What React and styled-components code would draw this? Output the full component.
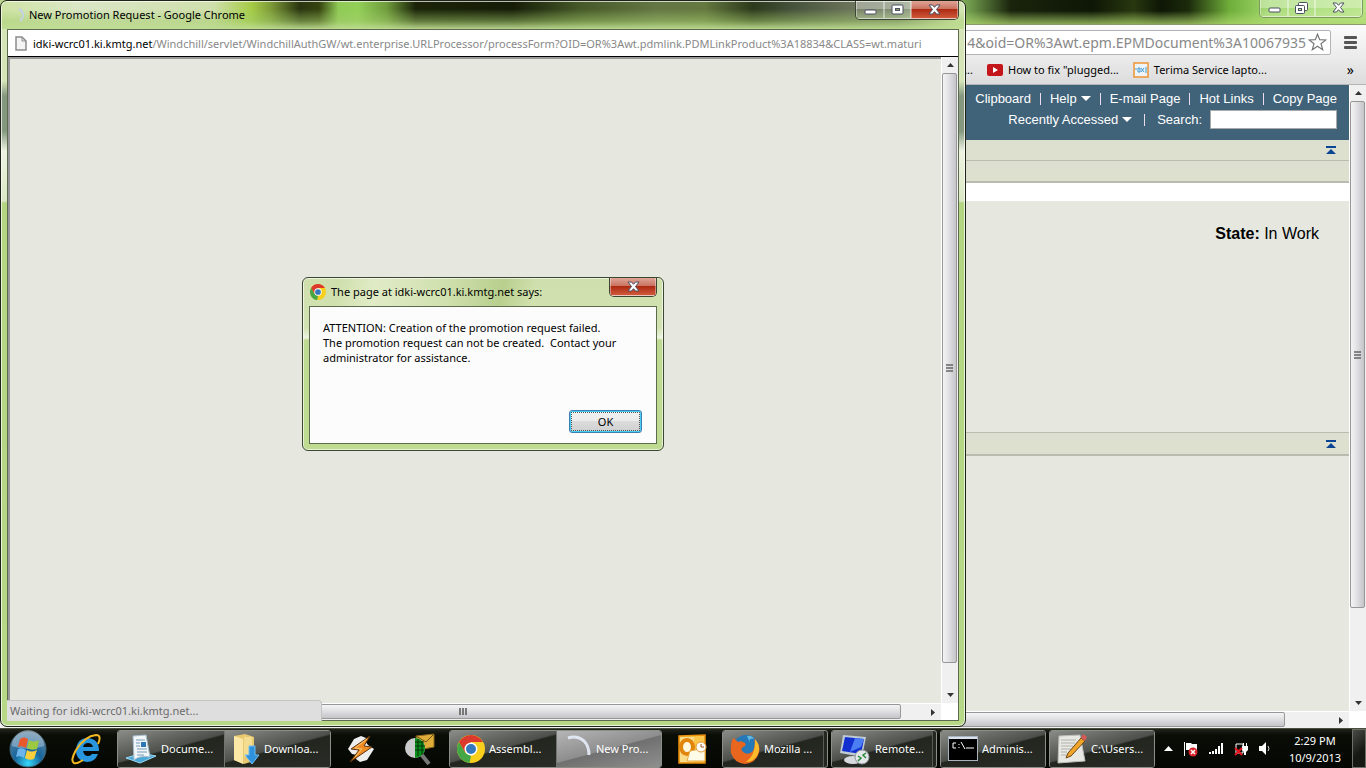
import React from 'react';
import { styled, createGlobalStyle, css } from 'styled-components';

const App = () => {
  return (
    <>
      <GlobalStyle />
      <Desktop>
        <Workspace>
          <MainWindow />
          <PopupWindow />
          <AlertDialog />
        </Workspace>
        <TaskbarArea />
      </Desktop>
    </>
  );
};

const MainWindow = () => {
  return (
    <Browser>
      <BrowserGlass>
        <CaptionButtons $clear>
          <CaptionButton aria-label='Minimize' $width={28}>
            <MinimizeGlyph />
          </CaptionButton>
          <CaptionButton aria-label='Restore' $width={27}>
            <RestoreGlyph />
          </CaptionButton>
          <CaptionButton aria-label='Close' $width={47}>
            <CloseGlyph />
          </CaptionButton>
        </CaptionButtons>
      </BrowserGlass>
      <Toolbar>
        <Omnibox>
          <input
            aria-label='Address'
            defaultValue='4&oid=OR%3Awt.epm.EPMDocument%3A10067935'
          />
          <StarIcon />
        </Omnibox>
        <MenuButton aria-label='Menu'>
          <span />
          <span />
          <span />
        </MenuButton>
      </Toolbar>
      <Bookmarks>
        <a href='#more'>...</a>
        <a href='#plugged'>
          <YoutubeIcon />
          How to fix "plugged...
        </a>
        <a href='#terima'>
          <XamppIcon />
          Terima Service lapto...
        </a>
        <OverflowButton aria-label='More bookmarks'>»</OverflowButton>
      </Bookmarks>
      <Viewport>
        <PageColumn>
          <WindchillHeader>
            <NavRow>
              <Divider />
              <a href='#clipboard'>Clipboard</a>
              <Divider />
              <a href='#help'>
                Help <Caret />
              </a>
              <Divider />
              <a href='#email'>E-mail Page</a>
              <Divider />
              <a href='#hot'>Hot Links</a>
              <Divider />
              <a href='#copy'>Copy Page</a>
            </NavRow>
            <NavRow $wide>
              <a href='#recent'>
                Recently Accessed <Caret />
              </a>
              <Divider />
              <label htmlFor='search'>Search:</label>
              <SearchInput id='search' type='text' />
            </NavRow>
          </WindchillHeader>
          <Band $height={21} $line={1}>
            <CollapseButton aria-label='Collapse header'>
              <CollapseIcon />
            </CollapseButton>
          </Band>
          <Band $height={22} $line={2} />
          <WhiteStrip />
          <StateRow>
            <b>State:</b> In Work
          </StateRow>
          <Band $height={24} $line={2} $top>
            <CollapseButton aria-label='Collapse details'>
              <CollapseIcon />
            </CollapseButton>
          </Band>
          <PageRest />
          <HScroll size={1267} rest={48} />
        </PageColumn>
        <ScrollColumn>
          <VScroll size={504} rest={88} />
          <ScrollCorner />
        </ScrollColumn>
      </Viewport>
    </Browser>
  );
};

const PopupWindow = () => {
  return (
    <Popup>
      <PopupTitle>
        <LoadingIcon />
        <h1>New Promotion Request - Google Chrome</h1>
        <CaptionButtons>
          <CaptionButton aria-label='Minimize' $width={28}>
            <MinimizeGlyph />
          </CaptionButton>
          <CaptionButton aria-label='Maximize' $width={27}>
            <MaximizeGlyph />
          </CaptionButton>
          <CaptionButton aria-label='Close' $width={47} $red>
            <CloseGlyph />
          </CaptionButton>
        </CaptionButtons>
      </PopupTitle>
      <PopupBody>
        <PopupUrl>
          <PageIcon />
          <p>
            <b>idki-wcrc01.ki.kmtg.net</b>
            /Windchill/servlet/WindchillAuthGW/wt.enterprise.URLProcessor/processForm?OID=OR%3Awt.pdmlink.PDMLinkProduct%3A18834&amp;CLASS=wt.maturi
          </p>
        </PopupUrl>
        <PopupContent>
          <PageColumn>
            <BlankPage />
            <HScroll size={873} rest={24} />
          </PageColumn>
          <ScrollColumn>
            <VScroll size={588} rest={24} />
            <ScrollCorner />
          </ScrollColumn>
        </PopupContent>
        <StatusBubble>Waiting for idki-wcrc01.ki.kmtg.net...</StatusBubble>
      </PopupBody>
    </Popup>
  );
};

const AlertDialog = () => {
  return (
    <Dialog role='alertdialog' aria-labelledby='alert-title'>
      <DialogTitle>
        <ChromeIcon size={16} />
        <h2 id='alert-title'>The page at idki-wcrc01.ki.kmtg.net says:</h2>
        <CaptionButtons>
          <CaptionButton aria-label='Close' $width={46} $red>
            <CloseGlyph />
          </CaptionButton>
        </CaptionButtons>
      </DialogTitle>
      <DialogBody>
        <p>
          ATTENTION: Creation of the promotion request failed.
          <br />
          The promotion request can not be created.&nbsp; Contact your
          <br />
          administrator for assistance.
        </p>
        <OkButton>
          <span>OK</span>
        </OkButton>
      </DialogBody>
    </Dialog>
  );
};

const TaskbarArea = () => {
  return (
    <Taskbar>
      <StartButton aria-label='Start'>
        <StartOrb />
      </StartButton>
      <PinButton aria-label='Internet Explorer' $width={62}>
        <IeIcon />
      </PinButton>
      <TaskGroup>
        <TaskButton $width={106}>
          <DocumentsIcon />
          <span>Docume...</span>
        </TaskButton>
        <TaskButton $width={106}>
          <FolderIcon />
          <span>Downloa...</span>
        </TaskButton>
      </TaskGroup>
      <PinButton aria-label='Winamp' $width={59}>
        <WinampIcon />
      </PinButton>
      <PinButton aria-label='Mail search' $width={59}>
        <MailSearchIcon />
      </PinButton>
      <TaskGroup>
        <TaskButton $width={106}>
          <ChromeIcon size={28} />
          <span>Assembl...</span>
        </TaskButton>
        <TaskButton $width={105} $active>
          <SpinnerIcon />
          <span>New Pro...</span>
        </TaskButton>
      </TaskGroup>
      <PinButton aria-label='Outlook' $width={60}>
        <OutlookIcon />
      </PinButton>
      <TaskGroup $stack>
        <TaskButton $width={100}>
          <FirefoxIcon />
          <span>Mozilla ...</span>
        </TaskButton>
      </TaskGroup>
      <TaskGroup $stack>
        <TaskButton $width={100}>
          <RemoteIcon />
          <span>Remote...</span>
        </TaskButton>
      </TaskGroup>
      <TaskGroup>
        <TaskButton $width={104}>
          <ConsoleIcon />
          <span>Adminis...</span>
        </TaskButton>
      </TaskGroup>
      <TaskGroup>
        <TaskButton $width={104}>
          <NotepadIcon />
          <span>C:\Users...</span>
        </TaskButton>
      </TaskGroup>
      <Tray>
        <TrayButton aria-label='Show hidden icons'>
          <svg width='9' height='5' viewBox='0 0 9 5'>
            <path d='M0 5L4.500 0L9 5z' fill='#fff' />
          </svg>
        </TrayButton>
        <TrayButton aria-label='Action center'>
          <FlagIcon />
        </TrayButton>
        <TrayButton aria-label='Network'>
          <SignalIcon />
        </TrayButton>
        <TrayButton aria-label='Power'>
          <PowerIcon />
        </TrayButton>
        <TrayButton aria-label='Volume'>
          <VolumeIcon />
        </TrayButton>
        <Clock>
          <span>2:29 PM</span>
          <span>10/9/2013</span>
        </Clock>
        <ShowDesktop aria-label='Show desktop' />
      </Tray>
    </Taskbar>
  );
};

/* scrollbars */

const VScroll = ({ size, rest }) => (
  <VBar>
    <ScrollArrow aria-label='Scroll up'>
      <svg width='7' height='4' viewBox='0 0 7 4'>
        <path d='M0 4L3.500 0L7 4z' fill='#333' />
      </svg>
    </ScrollArrow>
    <VThumb style={{ flexGrow: size }}>
      <svg width='7' height='8' viewBox='0 0 7 8'>
        <path d='M0 1h7M0 4h7M0 7h7' stroke='#666' strokeWidth='1.500' />
      </svg>
    </VThumb>
    <div style={{ flexGrow: rest }} />
    <ScrollArrow aria-label='Scroll down'>
      <svg width='7' height='4' viewBox='0 0 7 4'>
        <path d='M0 0L3.500 4L7 0z' fill='#333' />
      </svg>
    </ScrollArrow>
  </VBar>
);

const HScroll = ({ size, rest }) => (
  <HBar>
    <ScrollArrow aria-label='Scroll left'>
      <svg width='4' height='7' viewBox='0 0 4 7'>
        <path d='M4 0L0 3.500L4 7z' fill='#333' />
      </svg>
    </ScrollArrow>
    <HThumb style={{ flexGrow: size }}>
      <svg width='8' height='7' viewBox='0 0 8 7'>
        <path d='M1 0v7M4 0v7M7 0v7' stroke='#555' strokeWidth='1.500' />
      </svg>
    </HThumb>
    <div style={{ flexGrow: rest }} />
    <ScrollArrow aria-label='Scroll right'>
      <svg width='4' height='7' viewBox='0 0 4 7'>
        <path d='M0 0L4 3.500L0 7z' fill='#333' />
      </svg>
    </ScrollArrow>
  </HBar>
);

/* window glyphs */

const MinimizeGlyph = () => (
  <svg width='13' height='12' viewBox='0 0 13 12'>
    <rect x='1' y='6' width='11' height='4' rx='1' fill='#fff' stroke='#4b4f62' />
  </svg>
);

const MaximizeGlyph = () => (
  <svg width='13' height='12' viewBox='0 0 13 12'>
    <rect x='1' y='1' width='11' height='9' rx='1' fill='#fff' stroke='#4b4f62' />
    <rect x='4.500' y='4.500' width='4' height='2' fill='#8d9a70' stroke='#4b4f62' />
  </svg>
);

const RestoreGlyph = () => (
  <svg width='13' height='13' viewBox='0 0 13 13'>
    <rect x='3.500' y='0.500' width='9' height='8' rx='1' fill='#fff' stroke='#4b4f62' />
    <rect x='0.500' y='3.500' width='9' height='8' rx='1' fill='#fff' stroke='#4b4f62' />
    <rect x='3.500' y='6.500' width='3' height='2' fill='#c6e89a' stroke='#4b4f62' />
  </svg>
);

const CloseGlyph = () => (
  <svg width='13' height='12' viewBox='0 0 13 12'>
    <path
      d='M1 1h3.500L6.500 3.300L8.500 1H12L8.500 5.500L12 10H8.500L6.500 7.700L4.500 10H1L4.500 5.500z'
      fill='#fff'
      stroke='#4b4f62'
    />
  </svg>
);

const CollapseIcon = () => (
  <svg width='10' height='8' viewBox='0 0 10 8'>
    <path d='M0 0h10v2H0zM5 3L10 8H0z' fill='#0a4595' />
  </svg>
);

const PageIcon = () => (
  <svg width='12' height='15' viewBox='0 0 12 15'>
    <path d='M1 1h6l4 4v9H1z' fill='#f4f4f4' stroke='#8c8c8c' strokeWidth='1.500' />
    <path d='M7 1v4h4' fill='none' stroke='#8c8c8c' />
  </svg>
);

const StarIcon = () => (
  <svg width='19' height='18' viewBox='0 0 19 18'>
    <path
      d='M9.500 1.200L11.700 6.700L17.800 7L13 10.700L14.700 16.700L9.500 13.200L4.300 16.700L6 10.700L1.200 7L7.300 6.700z'
      fill='#fff'
      stroke='#777'
      strokeWidth='1.200'
    />
  </svg>
);

const YoutubeIcon = () => (
  <svg width='16' height='12' viewBox='0 0 16 12'>
    <rect width='16' height='12' rx='2' fill='#c4151a' />
    <path d='M6 3L11 6L6 9z' fill='#fff' />
  </svg>
);

const XamppIcon = () => (
  <svg width='16' height='16' viewBox='0 0 16 16'>
    <rect x='1' y='1' width='14' height='14' fill='#eef3f6' stroke='#ee9434' strokeWidth='1.500' />
    <path
      d='M2 7h2M5 6h2v4H5zM8 6l3 4M11 6L8 10M12 6h2M12 8h2M12 10h2'
      fill='none'
      stroke='#3f9ad6'
    />
  </svg>
);

const LoadingIcon = () => (
  <svg width='14' height='14' viewBox='0 0 14 14'>
    <path d='M9 1Q13 3 13 7Q13 11 10 13' fill='none' stroke='#c3d2e2' strokeWidth='2' />
  </svg>
);

const SpinnerIcon = () => (
  <svg width='28' height='28' viewBox='0 0 28 28'>
    <path
      d='M4 3Q13 0 20 6Q25 11 25 20'
      fill='none'
      stroke='#dfe6f2'
      strokeWidth='3'
    />
  </svg>
);

const ChromeIcon = ({ size }) => (
  <svg width={size} height={size} viewBox='0 0 28 28'>
    <circle cx='14' cy='14' r='14' fill='#f8cf1c' />
    <path d='M14 7H26.100A14 14 0 0 0 1.900 7L8 17.500z' fill='#dc3a2c' />
    <path d='M1.900 7L8 17.500L14 21L12.500 28A14 14 0 0 1 1.900 7z' fill='#46a545' />
    <circle cx='14' cy='14' r='6.500' fill='#fff' />
    <circle cx='14' cy='14' r='5' fill='#3377bd' />
  </svg>
);

/* taskbar icons */

const StartOrb = () => (
  <svg width='38' height='38' viewBox='0 0 38 38'>
    <defs>
      <radialGradient id='orb' cx='50%' cy='90%' r='85%'>
        <stop offset='0' stopColor='#35d9fb' />
        <stop offset='0.450' stopColor='#16659c' />
        <stop offset='1' stopColor='#5d87a5' />
      </radialGradient>
    </defs>
    <circle cx='19' cy='19' r='18' fill='url(#orb)' stroke='#44606f' />
    <path d='M3 16A16 16 0 0 1 35 16Q19 22 3 16z' fill='#fff' opacity='0.300' />
    <path d='M11 9Q15 6 19 9L17 18Q13 15 9 17z' fill='#e9582b' />
    <path d='M20 10Q25 13 30 10L28 19Q22 21 18 18z' fill='#9bc93f' />
    <path d='M9 19Q13 17 17 20L15 28Q11 25 7 27z' fill='#6bb4ec' />
    <path d='M18 20Q22 23 28 20L25 29Q20 31 16 28z' fill='#fbcf3c' />
  </svg>
);

const IeIcon = () => (
  <svg width='32' height='32' viewBox='0 0 32 32'>
    <path
      d='M29 18H13Q14 23 18 23Q21 23 22 21H28Q25 29 17 29Q6 28 6 17Q7 5 18 5Q29 6 29 18zM13 14H23Q22 10 18 10Q14 10 13 14z'
      fill='#2997df'
    />
    <path
      d='M28 11Q32 2 26 2Q15 3 6 17Q0 28 4 30Q7 31 13 27'
      fill='none'
      stroke='#f4b622'
      strokeWidth='2'
    />
  </svg>
);

const DocumentsIcon = () => (
  <svg width='32' height='30' viewBox='0 0 32 30'>
    <path d='M1 24L17 19L31 22L15 29z' fill='#4ba9d8' stroke='#9bd8f3' />
    <path d='M8 2L21 1L25 23Q15 21 9 26z' fill='#f0f6fa' stroke='#a7bccb' />
    <path d='M11 6h9M11 9h4M11 12h4M12 15h10M12 18h10M12 21h7' stroke='#7699b4' />
    <rect x='16' y='8' width='5' height='5' fill='#2d76b4' />
  </svg>
);

const FolderIcon = () => (
  <svg width='28' height='32' viewBox='0 0 28 32'>
    <path d='M2 3L13 1L22 4V28L12 31L2 27z' fill='#e9c970' />
    <path d='M2 3L11 6V31L2 27z' fill='#fbe8a6' />
    <path d='M12 4h8v20h-8z' fill='#f4dd91' />
    <path d='M17 13H23V22H27L20 31L13 22H17z' fill='#2e93dc' stroke='#75bdf0' />
  </svg>
);

const WinampIcon = () => (
  <svg width='28' height='28' viewBox='0 0 28 28'>
    <path d='M14 1L19 3L18 6L21 10L27 14L20 25L13 27L9 24L10 20L5 19L1 14L7 4z' fill='#eee' />
    <path d='M23 1L4 14L12 15L3 27L25 12L17 11z' fill='#f08b22' stroke='#5e3510' />
    <path d='M20 4L8 13L15 14L8 22' fill='none' stroke='#fcc877' />
  </svg>
);

const MailSearchIcon = () => (
  <svg width='32' height='34' viewBox='0 0 32 34'>
    <path d='M12 4L30 2V15L14 18z' fill='#dfae3a' stroke='#8b691b' />
    <path d='M12 4L22 10L30 2' fill='none' stroke='#6d5110' />
    <path d='M17 22L25 32' stroke='#777' strokeWidth='4' />
    <circle cx='11' cy='16' r='10' fill='#c9cbcc' />
    <path d='M11 6A10 10 0 0 1 11 26z' fill='#0a8f1c' />
    <path d='M11 10h9M11 14h10M11 18h9M14 7v17M18 9v14' stroke='#04340a' />
  </svg>
);

const OutlookIcon = () => (
  <svg width='30' height='30' viewBox='0 0 30 30'>
    <path d='M2 2L28 1V29H2z' fill='#fbc64a' stroke='#e98f0c' strokeWidth='1.500' />
    <path d='M3 3H17V28H3z' fill='#f9dc8a' />
    <ellipse cx='10' cy='13' rx='6' ry='7' fill='#fff8df' stroke='#e2850d' strokeWidth='4' />
    <path d='M13 17L28 14V27H10z' fill='#fffbe9' stroke='#e7a941' />
    <circle cx='24' cy='13' r='5' fill='#fff' stroke='#e39a33' />
    <path d='M24 10v3h3' fill='none' stroke='#a05d18' />
  </svg>
);

const FirefoxIcon = () => (
  <svg width='30' height='30' viewBox='0 0 30 30'>
    <circle cx='16' cy='14' r='13' fill='#2579b8' />
    <path d='M17 2Q22 1 24 5Q18 4 20 9z' fill='#61b6e2' />
    <path
      d='M3 4Q5 5 8 8Q11 6 15 9Q17 12 13 13Q10 15 13 18Q18 22 23 17Q26 11 24 5Q31 10 29 19Q26 29 15 30Q4 29 1 19Q0 10 3 4z'
      fill='#e9661f'
    />
    <path d='M25 5Q32 13 27 22Q23 28 16 28Q26 21 25 5z' fill='#fbbb2b' />
  </svg>
);

const RemoteIcon = () => (
  <svg width='32' height='32' viewBox='0 0 32 32'>
    <ellipse cx='14' cy='27' rx='9' ry='4' fill='#d6dade' />
    <path d='M4 2L27 4L23 24L1 20z' fill='#bfcbd4' />
    <path d='M6 4L25 6L22 21L3 18z' fill='#1230d0' />
    <path d='M16 5L25 6L22 14L11 19z' fill='#4b7df3' />
    <circle cx='23' cy='24' r='7' fill='#e3e6e8' stroke='#8d9499' />
    <path d='M19 23l3 2l-3 3M27 20l-3 2l3 3' fill='none' stroke='#2a8a3b' strokeWidth='1.500' />
  </svg>
);

const ConsoleIcon = () => (
  <svg width='30' height='25' viewBox='0 0 30 25'>
    <rect x='0.500' y='0.500' width='29' height='24' fill='#000' stroke='#aab4bf' />
    <path d='M1 1h28v2H1z' fill='#d9e3ee' />
    <path
      d='M8 7H5v5h3M11 8v1M11 11v1M13 6l4 7M18 12h8'
      fill='none'
      stroke='#fff'
    />
  </svg>
);

const NotepadIcon = () => (
  <svg width='30' height='32' viewBox='0 0 30 32'>
    <path d='M2 3L23 2L28 28L1 30z' fill='#e7e7e3' stroke='#bcbcb8' />
    <path d='M4 7h15M4 10h14M4 13h12M4 16h10M4 19h6M4 22h7' stroke='#b3b3ae' />
    <path d='M24 5L28 8L14 23L9 25L11 20z' fill='#f0a429' stroke='#6b4a17' />
    <path d='M26 1L30 4L28 8L24 5z' fill='#d85a56' />
  </svg>
);

const FlagIcon = () => (
  <svg width='16' height='16' viewBox='0 0 16 16'>
    <path d='M1 1h1v14H1zM3 2h5l1 1h5v8H8L7 9H3z' fill='#fff' />
    <circle cx='10' cy='11' r='4.500' fill='#d8232a' />
    <path d='M8 9l4 4M12 9l-4 4' stroke='#fff' strokeWidth='1.500' />
  </svg>
);

const SignalIcon = () => (
  <svg width='15' height='12' viewBox='0 0 15 12'>
    <path d='M0 9h2v2H0zM3 8h2v3H3zM6 6h2v5H6zM9 3h2v8H9zM12 0h2v11h-2z' fill='#fff' />
  </svg>
);

const PowerIcon = () => (
  <svg width='15' height='16' viewBox='0 0 15 16'>
    <path d='M2 3h7v9H2z' fill='none' stroke='#fff' />
    <path d='M8 5h6v4l-2 2v3h-2v-3L8 9zM9 2h1v3H9zM12 2h1v3h-1z' fill='#fff' />
    <path d='M1 7l7 7M8 7l-7 7' stroke='#e3151d' strokeWidth='2' />
  </svg>
);

const VolumeIcon = () => (
  <svg width='12' height='14' viewBox='0 0 12 14'>
    <path d='M0 4h3l4-4v13l-4-4H0z' fill='#fff' />
    <path d='M9 4q2 3 0 5' fill='none' stroke='#ddd' />
  </svg>
);

const uiFont = `'Noto Sans', 'Open Sans', sans-serif`;
const pageFont = `'Liberation Sans', Arial, sans-serif`;

const GlobalStyle = createGlobalStyle`
  * {
    box-sizing: border-box;
  }
  body {
    margin: 0;
    background-color: #000;
    font-family: ${uiFont};
    font-size: 11px;
    color: #000;
    overflow: hidden;
  }
  h1, h2, p {
    margin: 0;
    font-size: 11px;
    font-weight: normal;
  }
  button, input {
    margin: 0;
    padding: 0;
    border: none;
    background: none;
    font-family: inherit;
    color: inherit;
  }
  a {
    color: inherit;
    text-decoration: none;
  }
  svg {
    display: block;
    flex-shrink: 0;
  }
`;

const Desktop = styled.div`
  height: 100vh;
  display: flex;
  flex-direction: column;
`;

const Workspace = styled.main`
  position: relative;
  flex: 1;
  min-height: 0;
  display: flex;
`;

/* main browser */

const Browser = styled.section`
  flex: 1;
  min-width: 0;
  display: flex;
  flex-direction: column;
  background-color: #e6e8df;
`;

const BrowserGlass = styled.div`
  height: 25px;
  flex-shrink: 0;
  display: flex;
  justify-content: flex-end;
  align-items: flex-start;
  border-bottom: 1px solid #8a9a6c;
  background: linear-gradient(to bottom, transparent 45%, rgba(175, 215, 110, 0.75)),
    linear-gradient(
      to right,
      #b9d48c 69%,
      #6f9a4c 71%,
      #1a240c 74%,
      #0e1605 80%,
      #28380f 83%,
      #0e1605 85%,
      #1c2b0b 87%,
      #6fae3a 90%,
      #a0d86c 93%,
      #b4e483 100%
    );
`;

const CaptionButtons = styled.div`
  display: flex;
  height: 19px;
  margin-left: auto;
  border: 1px solid ${(props) => (props.$clear ? '#7d9a5c' : '#3c4433')};
  border-top: none;
  border-radius: 0 0 5px 5px;
  overflow: hidden;
  ${(props) =>
    props.$clear &&
    css`
      height: 18px;
      margin-right: 3px;
    `}
`;

const CaptionButton = styled.button`
  width: ${(props) => props.$width}px;
  display: flex;
  justify-content: center;
  align-items: center;
  border: 1px solid rgba(255, 255, 255, 0.4);
  border-top: none;
  background: linear-gradient(
    to bottom,
    rgba(255, 255, 255, 0.35) 50%,
    rgba(255, 255, 255, 0.08) 50%,
    rgba(255, 255, 255, 0.2)
  );

  ${(props) =>
    props.$red &&
    css`
      background: linear-gradient(to bottom, #dfa596, #c9705e 48%, #ae2b14 50%, #d0583a);
    `}
`;

const Toolbar = styled.div`
  height: 32px;
  flex-shrink: 0;
  display: flex;
  align-items: center;
  gap: 13px;
  padding: 2px 9px 0 9px;
  background: linear-gradient(to bottom, #fbfbfb, #ebebeb);
`;

const Omnibox = styled.div`
  flex: 1;
  height: 25px;
  display: flex;
  align-items: center;
  padding-right: 3px;
  border: 1px solid #b4b4b4;
  border-radius: 2px;
  background-color: #fff;

  input {
    flex: 1;
    min-width: 0;
    height: 22px;
    padding-right: 2px;
    font-size: 14px;
    text-align: right;
    color: #888;
    outline: none;
  }
`;

const MenuButton = styled.button`
  width: 13px;
  display: flex;
  flex-direction: column;
  gap: 2px;

  span {
    height: 3px;
    border-radius: 1px;
    background-color: #555;
  }
`;

const Bookmarks = styled.nav`
  height: 28px;
  flex-shrink: 0;
  display: flex;
  justify-content: flex-end;
  align-items: center;
  gap: 14px;
  padding: 0 12px 2px 0;
  border-bottom: 1px solid #b5b5b5;
  background: linear-gradient(to bottom, #ebebeb, #dcdcdc);

  a {
    display: flex;
    align-items: center;
    gap: 5px;
  }
`;

const OverflowButton = styled.button`
  margin-left: 66px;
  font-size: 14px;
`;

const Viewport = styled.div`
  flex: 1;
  min-height: 0;
  display: flex;
`;

const PageColumn = styled.div`
  flex: 1;
  min-width: 0;
  display: flex;
  flex-direction: column;
`;

const WindchillHeader = styled.header`
  height: 55px;
  flex-shrink: 0;
  display: flex;
  flex-direction: column;
  padding: 3px 12px 0 0;
  background-color: #41637a;
  color: #fff;
  font-family: ${pageFont};
  font-size: 13px;
`;

const NavRow = styled.div`
  height: 21px;
  display: flex;
  justify-content: flex-end;
  align-items: center;
  gap: ${(props) => (props.$wide ? '12px' : '9px')};

  a {
    display: flex;
    align-items: center;
    gap: 4px;
  }
  input {
    margin-left: -4px;
  }
`;

const Divider = styled.span`
  width: 1px;
  height: 12px;
  background-color: #ecdcf0;
`;

const Caret = styled.i`
  border: 5px solid transparent;
  border-top-color: #fff;
  border-bottom: none;
`;

const SearchInput = styled.input`
  width: 127px;
  height: 19px;
  border: 1px solid #a9a9a9;
  background-color: #fff;
  color: #000;
`;

const Band = styled.div`
  height: ${(props) => props.$height}px;
  flex-shrink: 0;
  display: flex;
  justify-content: flex-end;
  align-items: center;
  padding-right: 13px;
  background-color: #dddfcf;
  border-bottom: ${(props) => props.$line}px solid #b9bbae;
  ${(props) =>
    props.$top &&
    css`
      border-top: 1px solid #b9bbae;
    `}
`;

const CollapseButton = styled.button`
  display: flex;
`;

const WhiteStrip = styled.div`
  height: 18px;
  flex-shrink: 0;
  background-color: #fff;
`;

const StateRow = styled.p`
  height: 231px;
  flex-shrink: 0;
  padding: 24px 30px 0 0;
  font-family: ${pageFont};
  font-size: 16px;
  text-align: right;
`;

const PageRest = styled.div`
  flex: 1;
`;

/* scrollbars */

const ScrollColumn = styled.div`
  width: 17px;
  display: flex;
  flex-direction: column;
`;

const ScrollCorner = styled.div`
  height: 17px;
  background-color: #fff;
`;

const VBar = styled.div`
  flex: 1;
  min-height: 0;
  display: flex;
  flex-direction: column;
  background-color: #f0f0f0;
  border-left: 1px solid #fff;
`;

const HBar = styled.div`
  height: 17px;
  flex-shrink: 0;
  display: flex;
  background-color: #f0f0f0;
  border-top: 1px solid #fff;
`;

const ScrollArrow = styled.button`
  width: 16px;
  height: 16px;
  flex-shrink: 0;
  display: flex;
  justify-content: center;
  align-items: center;
`;

const VThumb = styled.div`
  width: 15px;
  display: flex;
  justify-content: center;
  align-items: center;
  border: 1px solid #979797;
  border-radius: 2px;
  background: linear-gradient(to right, #f4f4f5, #e1e1e4 45%, #c4c4c9);
`;

const HThumb = styled.div`
  height: 15px;
  display: flex;
  justify-content: center;
  align-items: center;
  border: 1px solid #979797;
  border-radius: 2px;
  background: linear-gradient(to bottom, #f4f4f5, #e1e1e4 45%, #c4c4c9);
`;

/* popup browser */

const Popup = styled.section`
  position: absolute;
  top: 0;
  bottom: 1px;
  left: 0;
  width: 966px;
  max-width: 100%;
  display: flex;
  flex-direction: column;
  padding: 0 6px 5px 6px;
  border: 1px solid #1d2415;
  border-radius: 7px;
  box-shadow: inset 0 0 0 1px rgba(255, 255, 255, 0.7);
  background: linear-gradient(to bottom, transparent 8px, rgba(165, 205, 110, 0.5) 20px, rgba(190, 220, 145, 0.95) 28px)
      0 0 / 100% 28px no-repeat,
    linear-gradient(
      to right,
      #cfe3a5,
      #dbe6c6 8%,
      #cfdfac 22%,
      #a5cc46 26%,
      #7d9a38 28%,
      #2a350f 31%,
      #35430f 33%,
      #8fca55 35%,
      #93d058 37%,
      #6f9c3c 40%,
      #1b2408 43%,
      #151c07 53%,
      #455827 60%,
      #647644 68%,
      #64783f 73%,
      #2c391b 78%,
      #45513a 82%,
      #6a7359 88%,
      #76836a 93%,
      #d5e6b6 99%
    )
      0 0 / 100% 28px no-repeat,
    linear-gradient(
      to bottom,
      #d5e5b8 80px,
      #84987f 95px,
      #84987f 130px,
      #eef3e2 150px,
      #dbe8c4 200px,
      #b4d582 202px,
      #b7d886
    );
`;

const PopupTitle = styled.header`
  height: 28px;
  flex-shrink: 0;
  display: flex;
  align-items: flex-start;
  gap: 5px;
  padding-left: 3px;

  > svg {
    margin-top: 7px;
  }
  h1 {
    line-height: 27px;
  }
`;

const PopupBody = styled.div`
  position: relative;
  flex: 1;
  min-height: 0;
  display: flex;
  flex-direction: column;
  border: 1px solid #5d6a50;
`;

const PopupUrl = styled.div`
  height: 27px;
  flex-shrink: 0;
  display: flex;
  align-items: center;
  gap: 6px;
  padding-left: 7px;
  border-bottom: 1px solid #000;
  background-color: #fff;
  overflow: hidden;

  p {
    white-space: nowrap;
    color: #888;
  }
  b {
    font-weight: normal;
    color: #000;
  }
`;

const PopupContent = styled.div`
  flex: 1;
  min-height: 0;
  display: flex;
`;

const BlankPage = styled.div`
  flex: 1;
  border: 2px solid #999;
  border-right: none;
  border-bottom: none;
  background-color: #e6e8df;
`;

const StatusBubble = styled.div`
  position: absolute;
  left: -1px;
  bottom: -1px;
  width: 315px;
  height: 21px;
  padding-left: 3px;
  border: 1px solid #c4c4c4;
  border-left: none;
  border-bottom: none;
  border-radius: 0 4px 0 0;
  background-color: #dedede;
  color: #6b6b6b;
  line-height: 20px;
`;

/* alert */

const Dialog = styled.section`
  position: absolute;
  left: 302px;
  top: 277px;
  width: 362px;
  height: 174px;
  display: flex;
  flex-direction: column;
  padding: 0 6px 6px 6px;
  border: 1px solid #3b4731;
  border-radius: 6px;
  box-shadow: inset 0 0 0 1px rgba(255, 255, 255, 0.65);
  background: linear-gradient(
      100deg,
      transparent 10%,
      rgba(235, 243, 215, 0.6) 20%,
      transparent 40%,
      rgba(160, 190, 110, 0.5) 55%,
      transparent 64%
    )
      0 0 / 100% 28px no-repeat,
    linear-gradient(to bottom, #cfdfac, #d3e2b2 50px, #eff4e3 60px, #bfda92 62px, #bedb91);
`;

const DialogTitle = styled.header`
  height: 28px;
  flex-shrink: 0;
  display: flex;
  align-items: flex-start;
  gap: 5px;
  padding-left: 1px;

  > svg {
    margin-top: 6px;
  }
  h2 {
    line-height: 28px;
  }
`;

const DialogBody = styled.div`
  flex: 1;
  display: flex;
  flex-direction: column;
  justify-content: space-between;
  padding: 13px 14px 10px 13px;
  border: 1px solid #5d6b4d;
  background-color: #fcfcfc;

  p {
    line-height: 15px;
    white-space: nowrap;
  }
`;

const OkButton = styled.button`
  width: 73px;
  height: 23px;
  align-self: flex-end;
  padding: 1px;
  border: 1px solid #3c7fb1;
  border-radius: 3px;
  box-shadow: inset 0 0 0 1px #48cdf4;
  background: linear-gradient(to bottom, #f2f2f2, #ebebeb 50%, #dcdcdc 50%, #cfcfcf);
  font-size: 11px;

  span {
    display: block;
    height: 19px;
    border: 1px dotted #555;
    line-height: 17px;
  }
`;

/* taskbar */

const Taskbar = styled.footer`
  height: 40px;
  flex-shrink: 0;
  display: flex;
  align-items: center;
  border-top: 1px solid #46503c;
  background: linear-gradient(to bottom, #20241c, #0a0d06 6px, #050703);
  color: #fff;
`;

const StartButton = styled.button`
  width: 55px;
  display: flex;
  justify-content: center;
`;

const PinButton = styled.button`
  width: ${(props) => props.$width}px;
  display: flex;
  justify-content: center;
`;

const TaskGroup = styled.div`
  height: 38px;
  flex-shrink: 0;
  display: flex;
  margin-right: 3px;
  border: 1px solid #8b8f88;
  border-radius: 3px;
  overflow: hidden;

  ${(props) =>
    props.$stack &&
    css`
      padding-right: 4px;
      background: linear-gradient(to right, transparent calc(100% - 4px), #8b8f88 calc(100% - 4px), #22261f calc(100% - 3px));
    `}

  &:has(+ ${PinButton}) {
    margin-right: 0;
  }
`;

const TaskButton = styled.button`
  width: ${(props) => props.$width}px;
  display: flex;
  align-items: center;
  gap: 4px;
  padding-left: 7px;
  background: ${(props) =>
    props.$active
      ? 'linear-gradient(165deg, #b5b5b5, #8e8e8e 49%, #6f706f 51%, #8f8f8f)'
      : 'linear-gradient(165deg, #8a8c88, #4c4f4a 48%, #23261f 51%, #2a2d27)'};
  font-size: 11px;
  white-space: nowrap;

  & + & {
    border-left: 1px solid #70746d;
  }
`;

const Tray = styled.div`
  height: 100%;
  display: flex;
  align-items: center;
  gap: 10px;
  margin-left: auto;
`;

const TrayButton = styled.button`
  display: flex;
`;

const Clock = styled.time`
  width: 68px;
  display: flex;
  flex-direction: column;
  align-items: center;
  line-height: 17px;
`;

const ShowDesktop = styled.button`
  width: 14px;
  height: 100%;
  margin-left: -7px;
  border: 1px solid #6c7067;
  background: linear-gradient(135deg, #4a4d47, #161813 60%);
`;

export default App;
